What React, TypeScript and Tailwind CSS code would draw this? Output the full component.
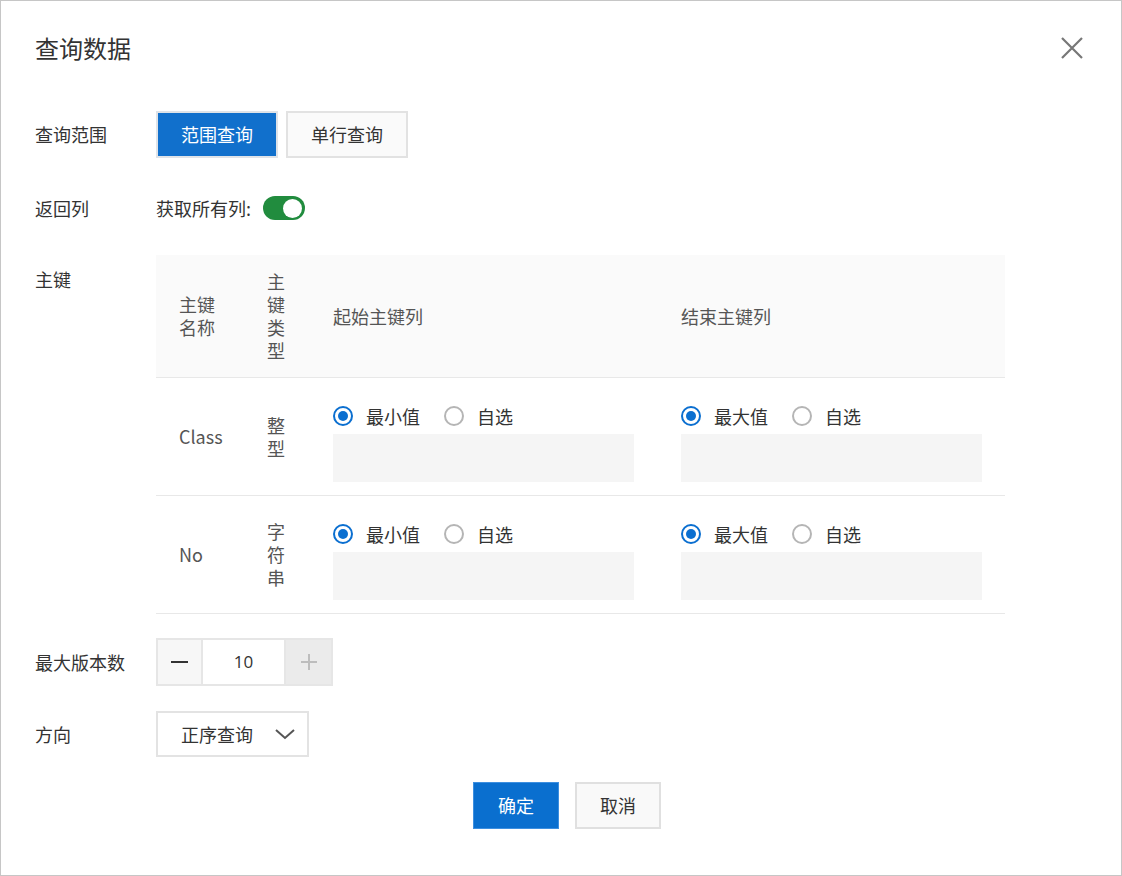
import React from "react";

function Radio({ checked, label }: { checked: boolean; label: string }) {
  return (
    <div className="flex items-center">
      <span
        className={
          checked
            ? "w-[20px] h-[20px] rounded-full border-2 border-[#0b6fd0] flex items-center justify-center bg-white"
            : "w-[20px] h-[20px] rounded-full border-2 border-[#b5b5b5] bg-white"
        }
      >
        {checked && <span className="w-[10px] h-[10px] rounded-full bg-[#0b6fd0]" />}
      </span>
      <span className="ml-[13px] text-[18px] leading-[24px] text-[#333]">{label}</span>
    </div>
  );
}

function RangeCell({ first }: { first: string }) {
  return (
    <div className="px-[23px] pt-[26px] pb-[13px]">
      <div className="flex items-center gap-[24px] h-[24px]">
        <Radio checked label={first} />
        <Radio checked={false} label="自选" />
      </div>
      <div className="mt-[6px] w-[301px] h-[48px] bg-[#f5f5f5]" />
    </div>
  );
}

function VText({ chars }: { chars: string }) {
  return (
    <div className="text-[18px] leading-[23px] text-[#555] w-[20px] break-all">{chars}</div>
  );
}

export default function App() {
  const rows = [
    { name: "Class", type: "整型" },
    { name: "No", type: "字符串" },
  ];
  return (
    <div className="w-[1122px] h-[876px] bg-white border border-[#c6c6c6] font-['Noto_Sans_CJK_SC','Noto_Sans',sans-serif] text-[#333] flex flex-col">
      {/* header */}
      <div className="h-[93px] flex items-center justify-between pl-[34px] pr-[37px]">
        <div className="text-[24px] leading-[30px] text-[#333]">查询数据</div>
        <svg width="24" height="24" viewBox="0 0 24 24" className="text-[#777]">
          <path d="M2 2 L22 22 M22 2 L2 22" stroke="currentColor" strokeWidth="2.2" fill="none" />
        </svg>
      </div>

      {/* 查询范围 */}
      <div className="mt-[17px] flex items-center h-[47px] pl-[34px]">
        <div className="w-[121px] text-[18px] leading-[24px] -mt-[1px]">查询范围</div>
        <div className="flex gap-[8px]">
          <div className="w-[122px] h-[47px] border-2 border-[#dfe3e8] bg-[#1170cc] text-white text-[18px] flex items-center justify-center">
            范围查询
          </div>
          <div className="w-[122px] h-[47px] border-2 border-[#e2e2e2] bg-[#fafafa] text-[#333] text-[18px] flex items-center justify-center">
            单行查询
          </div>
        </div>
      </div>

      {/* 返回列 */}
      <div className="mt-[38px] flex items-center h-[24px] pl-[34px]">
        <div className="w-[121px] text-[18px] leading-[24px]">返回列</div>
        <div className="flex items-center">
          <span className="text-[18px] leading-[24px] text-[#333]">获取所有列:</span>
          <span className="ml-[12px] w-[42px] h-[24px] rounded-full bg-[#218c3e] flex items-center justify-end pr-[3px]">
            <span className="w-[19px] h-[19px] rounded-full bg-white" />
          </span>
        </div>
      </div>

      {/* 主键 */}
      <div className="mt-[35px] flex pl-[34px]">
        <div className="w-[121px] pt-[12px] text-[18px] leading-[24px]">主键</div>
        <div className="w-[849px]">
          <div className="grid grid-cols-[88px_66px_348px_347px] bg-[#fafafa] h-[123px] border-b border-[#e8e8e8] items-center text-[#555]">
            <div className="px-[23px] text-[18px] leading-[23px]">主键名称</div>
            <div className="px-[23px]">
              <VText chars="主键类型" />
            </div>
            <div className="px-[23px] text-[18px] leading-[23px]">起始主键列</div>
            <div className="px-[23px] text-[18px] leading-[23px]">结束主键列</div>
          </div>
          {rows.map((r) => (
            <div
              key={r.name}
              className="grid grid-cols-[88px_66px_348px_347px] border-b border-[#e8e8e8] items-center"
            >
              <div className="px-[23px] text-[18px] leading-[23px] text-[#555]">{r.name}</div>
              <div className="px-[23px]">
                <VText chars={r.type} />
              </div>
              <RangeCell first="最小值" />
              <RangeCell first="最大值" />
            </div>
          ))}
        </div>
      </div>

      {/* 最大版本数 */}
      <div className="mt-[24px] flex items-center h-[48px] pl-[34px]">
        <div className="w-[121px] text-[18px] leading-[24px]">最大版本数</div>
        <div className="flex h-[48px] border-2 border-[#e6e6e6]">
          <div className="w-[45px] bg-[#f7f7f7] border-r-2 border-[#e6e6e6] flex items-center justify-center">
            <span className="w-[17px] h-[2px] bg-[#333]" />
          </div>
          <div className="w-[83px] bg-white border-r-2 border-[#e6e6e6] flex items-center justify-center text-[17px] text-[#333] font-['Open_Sans',sans-serif]">
            10
          </div>
          <div className="w-[45px] bg-[#ebebeb] flex items-center justify-center">
            <svg width="18" height="18" viewBox="0 0 18 18">
              <path d="M9 1 V17 M1 9 H17" stroke="#bdbdbd" strokeWidth="2" />
            </svg>
          </div>
        </div>
      </div>

      {/* 方向 */}
      <div className="mt-[25px] flex items-center h-[46px] pl-[34px]">
        <div className="w-[121px] text-[18px] leading-[24px]">方向</div>
        <div className="w-[153px] h-[46px] border-2 border-[#e3e3e3] flex items-center justify-between pl-[23px] pr-[11px]">
          <span className="text-[18px] leading-[24px] text-[#333]">正序查询</span>
          <svg width="22" height="14" viewBox="0 0 22 14">
            <path d="M2 3 L11 11 L20 3" stroke="#555" strokeWidth="2" fill="none" />
          </svg>
        </div>
      </div>

      {/* actions */}
      <div className="mt-[25px] flex justify-center gap-[16px] pl-[12px]">
        <div className="w-[86px] h-[47px] bg-[#0a6fcf] border border-[#3d8fe0] text-white text-[18px] flex items-center justify-center">
          确定
        </div>
        <div className="w-[86px] h-[47px] bg-[#f9f9f9] border-2 border-[#e0e0e0] text-[#333] text-[18px] flex items-center justify-center">
          取消
        </div>
      </div>
    </div>
  );
}
